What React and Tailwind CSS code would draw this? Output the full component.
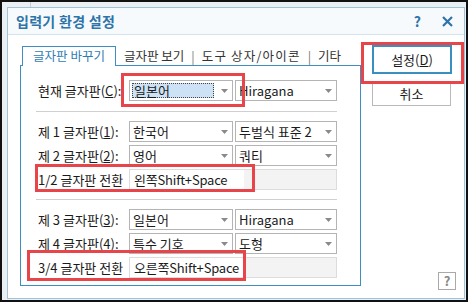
import React from 'react';

const Arrow = () => (
  <svg width="7" height="4" viewBox="0 0 7 4">
    <path d="M0 0h7L3.5 4z" fill="#8a8a8a" />
  </svg>
);

const Combo = ({ value, w, selected }) => (
  <div className={`flex h-[21px] items-center border border-[#b4b4b4] bg-white ${w}`}>
    {selected ? (
      <span className="m-[2px] flex h-[15px] flex-1 items-center border border-dotted border-[#444] bg-[#cde3f5] pl-[1px]">
        {value}
      </span>
    ) : (
      <span className="flex-1 pl-[3px]">{value}</span>
    )}
    <span className="flex w-[16px] justify-center">
      <Arrow />
    </span>
  </div>
);

const Label = ({ children }) => <div className="w-[91px] shrink-0 whitespace-nowrap">{children}</div>;

const Row = ({ label, a, b, selected }) => (
  <div className="flex h-[21px] items-center">
    <Label>{label}</Label>
    <Combo value={a} w="w-[104px]" selected={selected} />
    <div className="w-[2px]" />
    <Combo value={b} w="w-[102px]" />
  </div>
);

const Field = ({ label, value }) => (
  <div className="flex h-[21px] items-center">
    <Label>{label}</Label>
    <div className="flex h-[21px] w-[208px] items-center border border-[#dcdcdc] bg-[linear-gradient(to_right,#fff_0,#fff_114px,#f3f3f3_114px)] pl-[4px] tracking-[-0.2px]">
      {value}
    </div>
  </div>
);

const Sep = () => <div className="ml-[15px] mr-[23px] h-px bg-[#cfcfcf]" />;

const RedBox = ({ cls }) => <div className={`pointer-events-none absolute border-[3px] border-[#e8454b] ${cls}`} />;

export default function App() {
  return (
    <div className="relative h-[302px] w-[468px] overflow-hidden border-2 border-[#111] bg-[#eceff2] pl-[5px] pr-px pt-[5px] pb-px font-['Noto_Sans_CJK_KR','Noto_Sans',sans-serif] text-[13px] text-[#1b1b1b]">
      <div className="absolute left-[28px] top-0 h-[5px] w-px bg-[#c9cdd1]" />
      <div className="flex h-full flex-col border border-[#9fc3da] bg-white">
        <div className="flex h-[27px] items-center border-b border-[#d3e4ef] bg-[#f7fafc] pl-[8px] pr-[11px]">
          <div className="text-[14px] font-bold tracking-[0.3px] text-[#2d74a8]">입력기 환경 설정</div>
          <div className="ml-auto text-[14px] font-bold text-[#2d74a8]">?</div>
          <svg className="ml-[21px]" width="11" height="11" viewBox="0 0 11 11">
            <path d="M1 1l9 9M10 1l-9 9" stroke="#2d74a8" strokeWidth="2.2" />
          </svg>
        </div>
        <div className="flex flex-1 pl-[12px] pt-[11px]">
          <div className="flex w-[341px] flex-col">
            <div className="flex h-[20px] items-end text-[12.5px]">
              <div className="relative z-10 ml-[2px] flex h-[20px] w-[94px] items-center justify-center border border-b-0 border-[#3c8fc0] bg-white text-[#2f7cb4]">
                글자판 바꾸기
              </div>
              <div className="flex h-[20px] items-center whitespace-nowrap pl-[8px] text-[#333]">
                글자판 보기 <span className="px-[7px] text-[#777]">|</span>
                <span className="tracking-[1.2px]">도구 상자/아이콘</span>
                <span className="px-[7px] text-[#777]">|</span> 기타
              </div>
            </div>
            <div className="-mt-px flex h-[221px] flex-col border border-[#3c8fc0] pl-[17px] pt-[14px]">
              <Row label={<>현재 글자판(<u>C</u>):</>} a="일본어" b="Hiragana" selected />
              <div className="-ml-[17px] mb-[9px] mt-[10px]"><Sep /></div>
              <div className="flex flex-col gap-[3px]">
                <Row label={<>제 1 글자판(<u>1</u>):</>} a="한국어" b="두벌식 표준 2" />
                <Row label={<>제 2 글자판(<u>2</u>):</>} a="영어" b="쿼티" />
                <Field label="1/2 글자판 전환" value="왼쪽Shift+Space" />
              </div>
              <div className="-ml-[17px] mb-[9px] mt-[9px]"><Sep /></div>
              <div className="flex flex-col gap-[3px]">
                <Row label={<>제 3 글자판(<u>3</u>):</>} a="일본어" b="Hiragana" />
                <Row label={<>제 4 글자판(<u>4</u>):</>} a="특수 기호" b="도형" />
                <Field label="3/4 글자판 전환" value="오른쪽Shift+Space" />
              </div>
            </div>
          </div>
          <div className="flex flex-1 flex-col pl-[11px] pr-[11px]">
            <div className="mt-[-1px] flex h-[29px] w-[80px] items-center justify-center border-2 border-[#3a8fc0] bg-white">
              설정(<u>D</u>)
            </div>
            <div className="mt-[8px] flex h-[24px] w-[79px] items-center justify-center border border-[#b9b9b9] bg-white">
              취소
            </div>
            <div className="mb-[8px] ml-auto mr-[-3px] mt-auto flex h-[18px] w-[18px] items-center justify-center border border-[#a9a9a9] bg-white text-[13px] font-bold text-[#888]">
              ?
            </div>
          </div>
        </div>
      </div>
      <RedBox cls="left-[119px] top-[71px] h-[34px] w-[124px]" />
      <RedBox cls="left-[33px] top-[162px] h-[28px] w-[220px]" />
      <RedBox cls="left-[25px] top-[248px] h-[31px] w-[219px]" />
      <RedBox cls="left-[359px] top-[40px] h-[42px] w-[103px]" />
    </div>
  );
}
